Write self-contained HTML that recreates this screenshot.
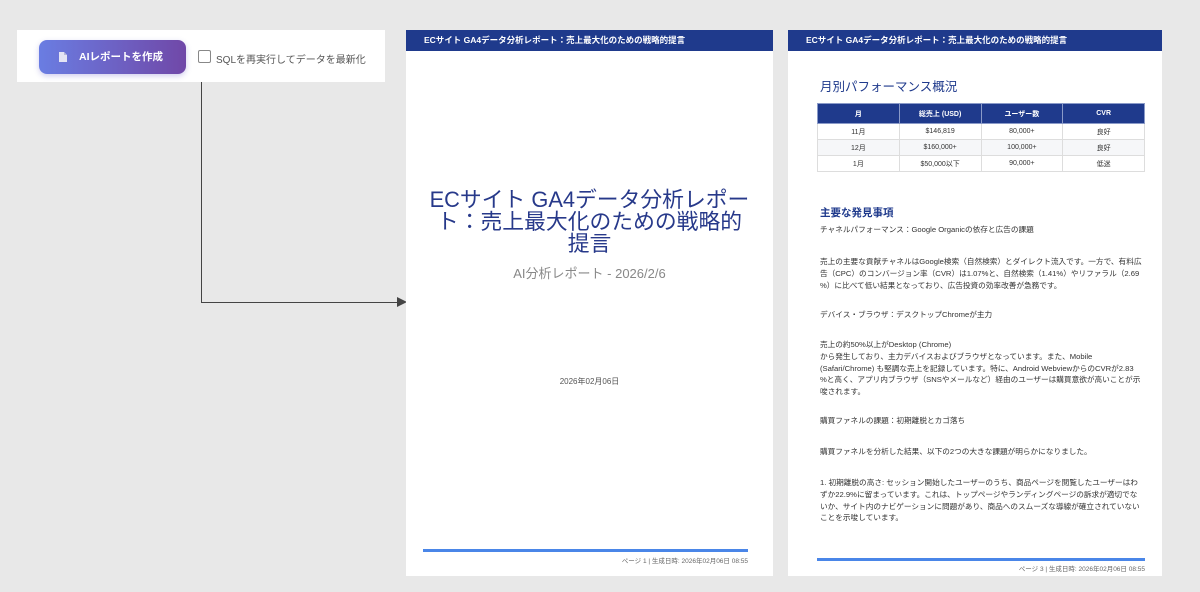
<!DOCTYPE html><html><head><meta charset="utf-8"><style>
body{margin:0;width:1200px;height:592px;background:#e8e8e8;font-family:"Liberation Sans","Noto Sans CJK JP",sans-serif;position:relative;overflow:hidden}
.abs{position:absolute}
.page{position:absolute;background:#fff;top:30px;height:546px}
.hd{position:absolute;left:0;right:0;top:0;height:21px;background:#1f3a8c;color:#fff;font-size:8.5px;font-weight:bold;line-height:21px;padding-left:18px}
.foot{position:absolute;height:3px;background:#4a86e8}
.ft{position:absolute;font-size:6.5px;color:#666}
table{border-collapse:collapse;font-size:7px;position:absolute;left:29px;top:73px;width:328px;table-layout:fixed}
th{background:#1f3a8c;color:#fff;height:19px;border:1px solid #8a9ac8;font-weight:bold;padding:0;vertical-align:middle}
td{height:15px;text-align:center;border:1px solid #ddd;color:#333;padding:0;vertical-align:middle}
tr:nth-child(odd) td{background:#f6f7f9}
.p{position:absolute;left:32px;font-size:7.65px;color:#333;line-height:11.8px;width:340px;white-space:nowrap}
</style></head><body>
<div class="abs" style="left:17px;top:30px;width:368px;height:52px;background:#fff"></div>
<div class="abs" style="left:39px;top:40px;width:147px;height:34px;border-radius:8px;background:linear-gradient(90deg,#6a7de2,#7048a8);box-shadow:0 2px 6px rgba(100,90,200,.3);color:#fff;font-size:10.5px;font-weight:bold;line-height:34px">
<svg class="abs" style="left:20px;top:12px" width="8" height="10" viewBox="0 0 8 10"><path d="M0 0H5L8 3V10H0Z" fill="#e4e4f4"/><path d="M5 0V3H8" fill="#b8b8d8"/></svg><span class="abs" style="left:40px">AIレポートを作成</span></div>
<div class="abs" style="left:198px;top:50px;width:11px;height:11px;border:1px solid #888;border-radius:2px"></div>
<div class="abs" style="left:216px;top:51px;font-size:10px;color:#555">SQLを再実行してデータを最新化</div>
<div class="abs" style="left:201px;top:82px;width:1px;height:221px;background:#444"></div>
<div class="abs" style="left:201px;top:302px;width:198px;height:1px;background:#444"></div>
<div class="abs" style="left:397px;top:297px;width:0;height:0;border-left:10px solid #444;border-top:5px solid transparent;border-bottom:5px solid transparent"></div>

<div class="page" style="left:406px;width:367px">
<div class="hd">ECサイト GA4データ分析レポート：売上最大化のための戦略的提言</div>
<div class="abs" style="left:0;width:367px;top:159px;text-align:center;font-size:21.8px;color:#27398a;line-height:22px;white-space:nowrap">ECサイト GA4データ分析レポー<br>ト：売上最大化のための戦略的<br>提言</div>
<div class="abs" style="left:0;right:0;top:233px;text-align:center;font-size:13px;color:#888">AI分析レポート - 2026/2/6</div>
<div class="abs" style="left:0;right:0;top:346px;text-align:center;font-size:8px;color:#555">2026年02月06日</div>
<div class="foot" style="left:17px;width:325px;top:519px"></div>
<div class="ft" style="right:25px;top:525px">ページ 1 | 生成日時: 2026年02月06日 08:55</div>
</div>

<div class="page" style="left:788px;width:374px">
<div class="hd">ECサイト GA4データ分析レポート：売上最大化のための戦略的提言</div>
<div class="abs" style="left:32px;top:46px;font-size:12.5px;color:#1f3a8c">月別パフォーマンス概況</div>
<table><tr><th>月</th><th>総売上 (USD)</th><th>ユーザー数</th><th>CVR</th></tr>
<tr><td>11月</td><td>$146,819</td><td>80,000+</td><td>良好</td></tr>
<tr><td>12月</td><td>$160,000+</td><td>100,000+</td><td>良好</td></tr>
<tr><td>1月</td><td>$50,000以下</td><td>90,000+</td><td>低迷</td></tr></table>
<div class="abs" style="left:32px;top:175px;font-size:10.5px;font-weight:bold;color:#1f3a8c">主要な発見事項</div>
<div class="p" style="top:194px">チャネルパフォーマンス：Google Organicの依存と広告の課題</div>
<div class="p" style="top:226px">売上の主要な貢献チャネルはGoogle検索（自然検索）とダイレクト流入です。一方で、有料広<br>告（CPC）のコンバージョン率（CVR）は1.07%と、自然検索（1.41%）やリファラル（2.69<br>%）に比べて低い結果となっており、広告投資の効率改善が急務です。</div>
<div class="p" style="top:279px">デバイス・ブラウザ：デスクトップChromeが主力</div>
<div class="p" style="top:309px">売上の約50%以上がDesktop (Chrome)<br>から発生しており、主力デバイスおよびブラウザとなっています。また、Mobile<br>(Safari/Chrome) も堅調な売上を記録しています。特に、Android WebviewからのCVRが2.83<br>%と高く、アプリ内ブラウザ（SNSやメールなど）経由のユーザーは購買意欲が高いことが示<br>唆されます。</div>
<div class="p" style="top:385px">購買ファネルの課題：初期離脱とカゴ落ち</div>
<div class="p" style="top:416px">購買ファネルを分析した結果、以下の2つの大きな課題が明らかになりました。</div>
<div class="p" style="top:447px">1. 初期離脱の高さ: セッション開始したユーザーのうち、商品ページを閲覧したユーザーはわ<br>ずか22.9%に留まっています。これは、トップページやランディングページの訴求が適切でな<br>いか、サイト内のナビゲーションに問題があり、商品へのスムーズな導線が確立されていない<br>ことを示唆しています。</div>
<div class="foot" style="left:29px;width:328px;top:528px"></div>
<div class="ft" style="right:17px;top:533px">ページ 3 | 生成日時: 2026年02月06日 08:55</div>
</div>
</body></html>
